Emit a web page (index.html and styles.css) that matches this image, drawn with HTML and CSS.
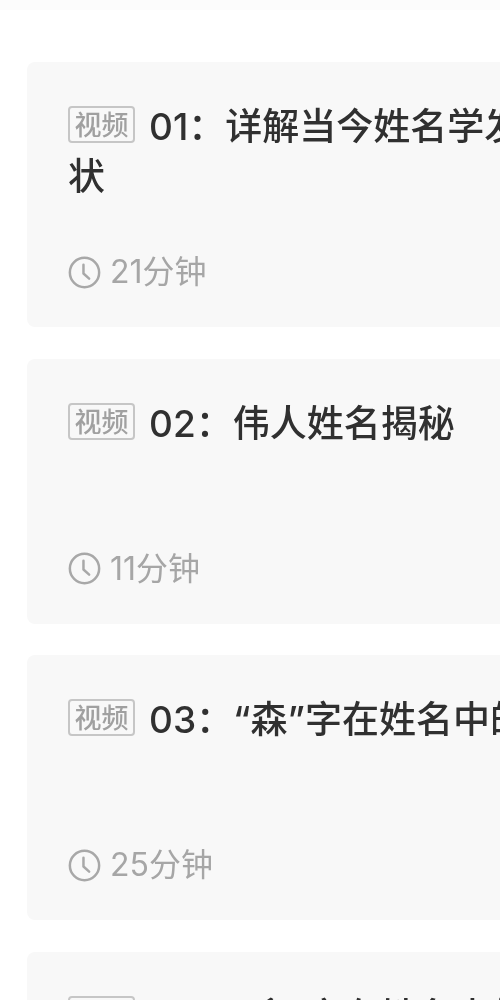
FILE: index.html
```html
<!DOCTYPE html>
<html lang="zh">
<head>
<meta charset="utf-8">
<title>课程目录</title>
<link rel="stylesheet" href="styles.css">
</head>
<body>
<div class="page">
  <div class="topline"></div>
  <ul class="list">
    <li class="card">
      <div class="title"><span class="tag">视频</span>01：详解当今姓名学发展现状</div>
      <div class="meta"><svg class="clock" viewBox="0 0 32 32"><circle cx="16" cy="16" r="14.2"/><path d="M15 8.5v8.5l5.5 5"/></svg><span>21分钟</span></div>
    </li>
    <li class="card">
      <div class="title"><span class="tag">视频</span>02：伟人姓名揭秘</div>
      <div class="meta"><svg class="clock" viewBox="0 0 32 32"><circle cx="16" cy="16" r="14.2"/><path d="M15 8.5v8.5l5.5 5"/></svg><span>11分钟</span></div>
    </li>
    <li class="card">
      <div class="title"><span class="tag">视频</span>03：“森”字在姓名中的运用</div>
      <div class="meta"><svg class="clock" viewBox="0 0 32 32"><circle cx="16" cy="16" r="14.2"/><path d="M15 8.5v8.5l5.5 5"/></svg><span>25分钟</span></div>
    </li>
    <li class="card">
      <div class="title"><span class="tag">视频</span>04：“鑫”字在姓名中的运用</div>
    </li>
  </ul>
</div>
</body>
</html>
```
FILE: styles.css
```css
html, body { margin: 0; padding: 0; background: #fff; overflow: hidden; }
.page { width: 500px; height: 1000px; overflow: hidden; font-family: Inter, "Noto Sans CJK SC", sans-serif; }
.topline { height: 10px; background: #fcfcfc; }
.list { list-style: none; margin: 52px 0 0 27px; padding: 0; width: 640px; display: flex; flex-direction: column; gap: 31.7px; }
.card { box-sizing: border-box; height: 265px; padding: 40px 41px 35px; background: #f8f8f8; border-radius: 8px; display: flex; flex-direction: column; justify-content: space-between; filter: blur(0.7px); }
.title { font-size: 37px; line-height: 50px; font-weight: 500; color: #303030; height: 100px; }
.tag { display: inline-block; box-sizing: border-box; width: 67px; height: 37px; margin-right: 14px; border: 2px solid #c6c6c6; border-radius: 4px; font-family: "Noto Sans CJK SC", sans-serif; font-size: 27px; line-height: 31px; font-weight: 500; color: #a0a0a0; text-align: center; vertical-align: 5px; white-space: nowrap; }
.meta { display: flex; align-items: center; gap: 9px; font-size: 32px; line-height: 40px; color: #a6a6a6; }
.clock { width: 33px; height: 33px; fill: none; stroke: #a8a8a8; stroke-width: 2.4; stroke-linecap: round; stroke-linejoin: round; }
```
